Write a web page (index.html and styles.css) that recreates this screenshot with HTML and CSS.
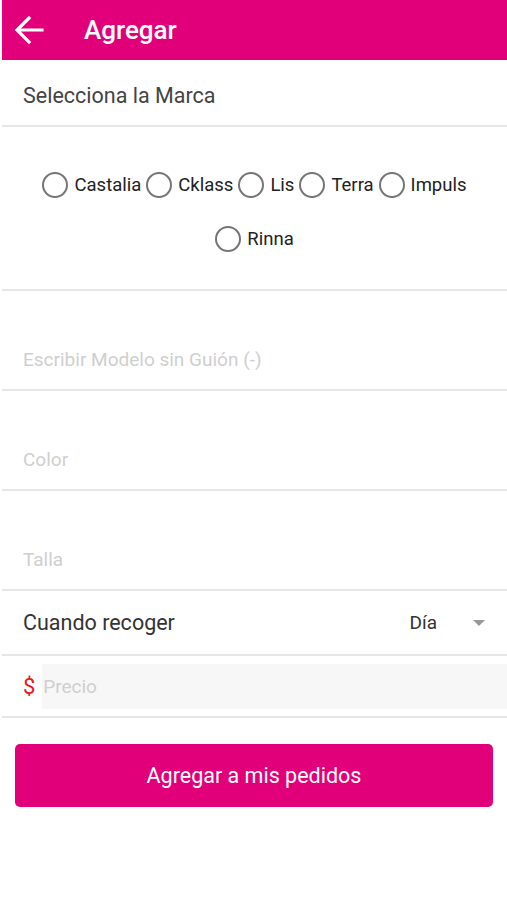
FILE: index.html
```html
<!DOCTYPE html>
<html lang="es">
<head>
  <meta charset="UTF-8">
  <title>Agregar</title>
  <link rel="stylesheet" href="styles.css">
</head>
<body>

  <header class="topbar">
    <svg class="back" width="30" height="30" viewBox="0 0 30 30">
      <path d="M28 15H4M15 3L3 15l12 12" fill="none" stroke="#fff" stroke-width="3.2" stroke-linecap="square"/>
    </svg>
    <h1>Agregar</h1>
  </header>

  <div class="row title-row">Selecciona la Marca</div>

  <div class="row brands">
    <label class="radio"><span class="dot"></span>Castalia</label>
    <label class="radio"><span class="dot"></span>Cklass</label>
    <label class="radio"><span class="dot"></span>Lis</label>
    <label class="radio"><span class="dot"></span>Terra</label>
    <label class="radio"><span class="dot"></span>Impuls</label>
    <label class="radio"><span class="dot"></span>Rinna</label>
  </div>

  <div class="row field"><input type="text" placeholder="Escribir Modelo sin Guión (-)"></div>
  <div class="row field"><input type="text" placeholder="Color"></div>
  <div class="row field"><input type="text" placeholder="Talla"></div>

  <div class="row pick">
    <span>Cuando recoger</span>
    <span class="select">Día <span class="caret"></span></span>
  </div>

  <div class="row price">
    <span class="dollar">$</span>
    <input type="text" placeholder="Precio">
  </div>

  <button class="add">Agregar a mis pedidos</button>

</body>
</html>
```

FILE: styles.css
```css
body {
  margin: 0;
  font-family: Roboto, "Noto Sans", sans-serif;
  background: #fff;
  color: #333;
}
.topbar {
  height: 60px;
  background: #e2007a;
  display: flex;
  align-items: center;
  margin-left: 2px;
}
.back {
  margin-left: 12px;
}
.topbar h1 {
  margin: 0 0 0 40px;
  color: #fff;
  font-size: 26px;
  font-weight: 500;
}
.row {
  border-bottom: 2px solid #e6e6e6;
  margin-left: 2px;
  box-sizing: border-box;
}
.title-row {
  height: 67px;
  padding: 23px 0 0 21px;
  font-size: 21.5px;
  color: #444;
}
.brands {
  height: 164px;
  padding: 44px 22px 0 22px;
  display: flex;
  flex-wrap: wrap;
  justify-content: center;
  align-content: flex-start;
  column-gap: 5px;
  row-gap: 26px;
}
.radio {
  display: flex;
  align-items: center;
  font-size: 18.5px;
  color: #222;
  height: 28px;
}
.dot {
  width: 22px;
  height: 22px;
  border: 2px solid #757575;
  border-radius: 50%;
  margin-right: 6px;
}
.field {
  height: 100px;
  display: flex;
  align-items: flex-end;
  padding: 0 0 18px 21px;
}
.field:first-of-type {
  height: 99px;
}
input {
  border: none;
  outline: none;
  font-family: inherit;
  font-size: 19px;
  background: transparent;
  width: 100%;
  padding: 0;
  color: #333;
}
input::placeholder {
  color: #cfcfcf;
}
.pick {
  height: 65px;
  display: flex;
  align-items: center;
  justify-content: space-between;
  padding: 0 22px 0 21px;
  font-size: 21.5px;
  color: #333;
}
.select {
  font-size: 19px;
  display: flex;
  align-items: center;
}
.caret {
  margin-left: 36px;
  width: 0;
  height: 0;
  border-left: 6px solid transparent;
  border-right: 6px solid transparent;
  border-top: 6px solid #999;
}
.price {
  height: 62px;
  display: flex;
  align-items: center;
  padding-left: 21px;
}
.dollar {
  color: #e8141e;
  font-size: 22px;
  width: 20px;
}
.price input {
  background: #f7f7f7;
  height: 45px;
  padding-left: 1px;
}
.add {
  display: block;
  margin: 26px 0 0 15px;
  width: 478px;
  height: 63px;
  border: none;
  border-radius: 5px;
  background: #e2007a;
  color: #fff;
  font-family: inherit;
  font-size: 21.5px;
  cursor: pointer;
}
```
